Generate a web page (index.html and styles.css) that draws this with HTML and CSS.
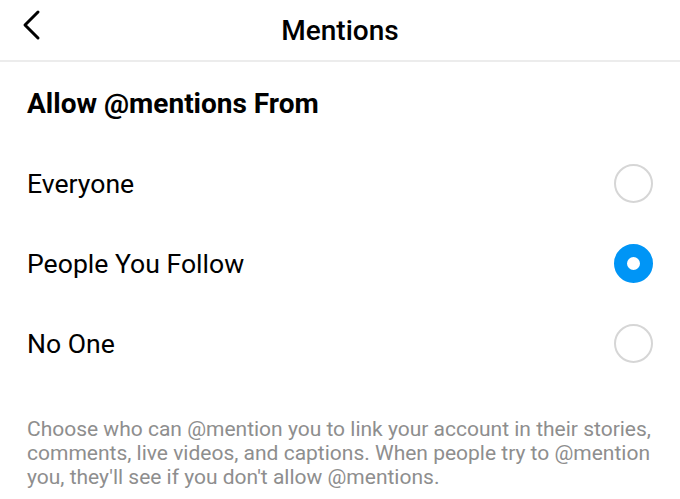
FILE: index.html
```html
<!DOCTYPE html>
<html lang="en">
<head>
    <meta charset="UTF-8">
    <meta name="viewport" content="width=device-width, initial-scale=1.0">
    <title>Mentions</title>
    <link rel="stylesheet" href="styles.css">
</head>
<body>
    <div class="screen">
        <!-- Barra superior -->
        <header class="topbar">
            <button class="back-btn" aria-label="Back">
                <svg width="24" height="32" viewBox="0 0 24 32">
                    <path d="M19 3 L6 16 L19 29" fill="none" stroke="#000" stroke-width="3" stroke-linecap="round" stroke-linejoin="round"/>
                </svg>
            </button>
            <h1 class="topbar-title">Mentions</h1>
        </header>

        <section class="settings">
            <h2 class="settings-title">Allow @mentions From</h2>

            <div class="option-list">
                <label class="option">
                    <span class="option-label">Everyone</span>
                    <span class="radio"></span>
                </label>
                <label class="option">
                    <span class="option-label">People You Follow</span>
                    <span class="radio radio-checked"></span>
                </label>
                <label class="option">
                    <span class="option-label">No One</span>
                    <span class="radio"></span>
                </label>
            </div>

            <p class="settings-note">Choose who can @mention you to link your account in their stories, comments, live videos, and captions. When people try to @mention you, they'll see if you don't allow @mentions.</p>
        </section>
    </div>
</body>
</html>
```

FILE: styles.css
```css
* {
    box-sizing: border-box;
}

body {
    margin: 0;
    background: #fff;
    font-family: Roboto, "Liberation Sans", sans-serif;
    color: #000;
}

.screen {
    width: 680px;
    height: 499px;
    overflow: hidden;
}

.topbar {
    position: relative;
    height: 62px;
    display: flex;
    align-items: center;
    justify-content: center;
    border-bottom: 2px solid #ececec;
}

.back-btn {
    position: absolute;
    left: 19px;
    top: 9px;
    background: none;
    border: 0;
    padding: 0;
    display: flex;
}

.topbar-title {
    margin: 0;
    font-size: 28px;
    font-weight: 500;
    letter-spacing: 0;
}

.settings {
    padding: 0 27px;
}

.settings-title {
    margin: 0;
    padding-top: 25px;
    height: 81px;
    font-size: 28px;
    font-weight: 700;
    letter-spacing: 0;
}

.option-list {
    display: flex;
    flex-direction: column;
}

.option {
    height: 80px;
    display: flex;
    align-items: center;
    justify-content: space-between;
}

.option-label {
    font-size: 26.6px;
    font-weight: 400;
    letter-spacing: 0;
}

.radio {
    width: 39px;
    height: 39px;
    margin-right: 0;
    border-radius: 50%;
    border: 2px solid #d6d6d6;
}

.radio-checked {
    border: 13px solid #0095f6;
    background: #fff;
}

.settings-note {
    margin: 34px 0 0;
    font-size: 21px;
    line-height: 24px;
    color: #8e8e8e;
}
```
